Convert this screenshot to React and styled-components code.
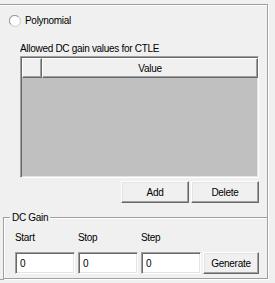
import styled, { createGlobalStyle } from 'styled-components'

const Global = createGlobalStyle`
  html, body {
    margin: 0;
    padding: 0;
    background: #f0f0f0;
  }
  body {
    font-family: 'Liberation Sans', Arial, sans-serif;
    font-size: 10px;
    letter-spacing: -0.3px;
    line-height: 13px;
    color: #000;
    overflow: hidden;
  }
`

const Frame = styled.div`
  box-sizing: border-box;
  margin: 4px 0 0 -2px;
  width: 270px;
  height: 276px;
  border: 1px solid #a0a0a0;
  box-shadow: inset 1px 1px 0 #fff, 1px 1px 0 #fff;
  display: flex;
  flex-direction: column;
`

const RadioRow = styled.label`
  display: flex;
  align-items: center;
  gap: 4px;
  margin: 9px 0 0 10px;
  height: 13px;
`

const Caption = styled.div`
  margin: 15px 0 0 21px;
  height: 13px;
  white-space: nowrap;
`

const Table = styled.div`
  box-sizing: border-box;
  margin: 1px 0 0 21px;
  width: 239px;
  height: 123px;
  border: 1px solid;
  border-color: #a0a0a0 #fff #fff #a0a0a0;
  box-shadow: inset 1px 1px 0 #696969, inset -1px -1px 0 #e3e3e3;
  padding: 1px;
  background: #c0c0c0;
  display: flex;
  flex-direction: column;
`

const HeaderRow = styled.div`
  display: grid;
  grid-template-columns: 20px 1fr;
  height: 20px;
  margin-right: -1px;
`

const HeaderCell = styled.div`
  box-sizing: border-box;
  background: #f0f0f0;
  border: 1px solid;
  border-color: #fff #696969 #696969 #fff;
  box-shadow: inset -1px -1px 0 #a0a0a0;
  display: flex;
  align-items: center;
  justify-content: center;
`

const ButtonRow = styled.div`
  display: flex;
  justify-content: flex-end;
  gap: 2px;
  margin: 3px 0 0 21px;
  width: 239px;
`

const Button = styled.button`
  box-sizing: border-box;
  width: ${(p) => p.$w || 68}px;
  height: 22px;
  padding: 0;
  margin: 0;
  font: inherit;
  letter-spacing: inherit;
  color: #000;
  background: #f0f0f0;
  border: 1px solid;
  border-color: #fff #696969 #696969 #fff;
  box-shadow: inset -1px -1px 0 #a0a0a0, inset 1px 1px 0 #e3e3e3;
  outline: none;
`

const GenerateButton = styled(Button)`
  margin-left: -1px;
`

const Group = styled.fieldset`
  box-sizing: border-box;
  margin: 8px 0 0 4px;
  padding: 0;
  width: 265px;
  height: 68px;
  min-inline-size: 0;
  border: 1px solid #a0a0a0;
  box-shadow: inset 1px 1px 0 #fff, 1px 1px 0 #fff;
`

const Legend = styled.legend`
  margin-left: 6px;
  padding: 0 2px;
  height: 13px;
  line-height: 13px;
  background: #f0f0f0;
`

const Fields = styled.div`
  display: grid;
  grid-template-columns: 60px 60px 60px 56px;
  column-gap: 3px;
  row-gap: 8px;
  padding: 7px 0 0 11px;
`

const FieldLabel = styled.div`
  height: 13px;
`

const Input = styled.input`
  box-sizing: border-box;
  width: 60px;
  height: 22px;
  margin: 0;
  padding: 0 0 0 4px;
  font: inherit;
  letter-spacing: inherit;
  color: #000;
  background: #fff;
  border: 1px solid;
  border-color: #a0a0a0 #fff #fff #a0a0a0;
  box-shadow: inset 1px 1px 0 #696969, inset -1px -1px 0 #e3e3e3;
  outline: none;
`

const Radio = () => (
  <svg width="12" height="12" viewBox="0 0 12 12">
    <circle cx="6" cy="6" r="5.5" fill="#fff" stroke="#b8b8b8" />
    <path d="M1.8 9.2 A4.6 4.6 0 0 1 9.2 1.8" fill="none" stroke="#9a9a9a" />
    <path d="M9.8 2.6 A4.6 4.6 0 0 1 2.6 9.8" fill="none" stroke="#e8e8e8" />
  </svg>
)

const App = () => (
  <>
    <Global />
    <Frame>
      <RadioRow>
        <Radio />
        <span>Polynomial</span>
      </RadioRow>
      <Caption>Allowed DC gain values for CTLE</Caption>
      <Table>
        <HeaderRow>
          <HeaderCell />
          <HeaderCell>Value</HeaderCell>
        </HeaderRow>
      </Table>
      <ButtonRow>
        <Button>Add</Button>
        <Button>Delete</Button>
      </ButtonRow>
      <Group>
        <Legend>DC Gain</Legend>
        <Fields>
          <FieldLabel>Start</FieldLabel>
          <FieldLabel>Stop</FieldLabel>
          <FieldLabel>Step</FieldLabel>
          <span />
          <Input defaultValue="0" />
          <Input defaultValue="0" />
          <Input defaultValue="0" />
          <GenerateButton $w={56}>Generate</GenerateButton>
        </Fields>
      </Group>
    </Frame>
  </>
)

export default App
